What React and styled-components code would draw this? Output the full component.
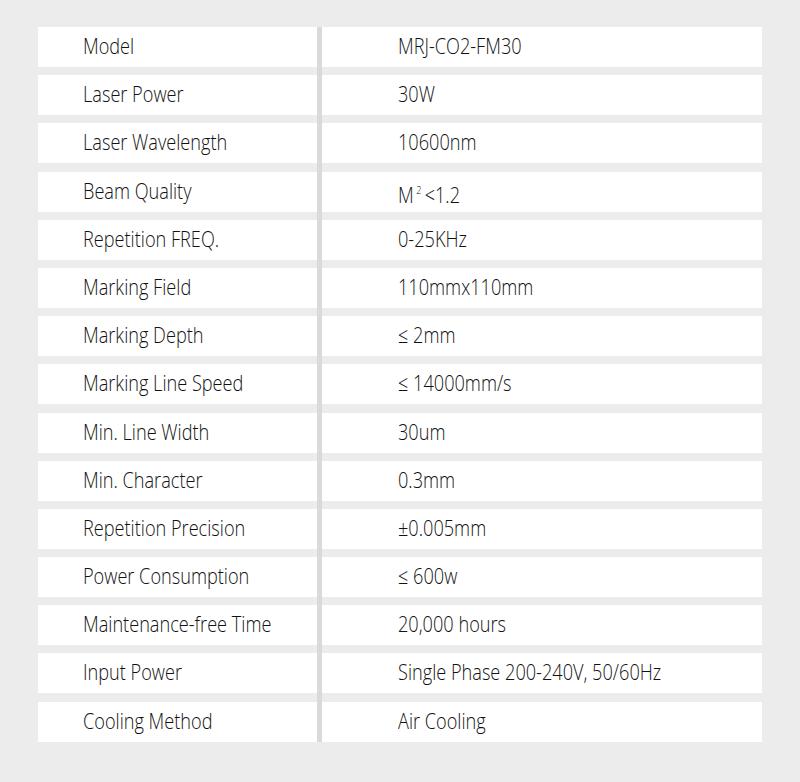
import React from "react";
import styled, { createGlobalStyle } from "styled-components";

const GlobalStyle = createGlobalStyle`
  html, body {
    margin: 0;
    padding: 0;
    background: #ececec;
  }
`;

const specs = [
  ["Model", "MRJ-CO2-FM30"],
  ["Laser Power", "30W"],
  ["Laser Wavelength", "10600nm"],
  ["Beam Quality", "beam"],
  ["Repetition FREQ.", "0-25KHz"],
  ["Marking Field", "110mmx110mm"],
  ["Marking Depth", "≤ 2mm"],
  ["Marking Line Speed", "≤ 14000mm/s"],
  ["Min. Line Width", "30um"],
  ["Min. Character", "0.3mm"],
  ["Repetition Precision", "±0.005mm"],
  ["Power Consumption", "≤ 600w"],
  ["Maintenance-free Time", "20,000 hours"],
  ["Input Power", "Single Phase 200-240V, 50/60Hz"],
  ["Cooling Method", "Air Cooling"],
];

const App = () => {
  return (
    <Page>
      <GlobalStyle />
      <Table>
        <Divider />
        {specs.map(([label, value]) => (
          <React.Fragment key={label}>
            <Cell $indent='45px'>
              <Text>{label}</Text>
            </Cell>
            <Cell $indent='76px'>
              <Text>
                {value === "beam" ? (
                  <>
                    M<Sup>2</Sup>&lt;1.2
                  </>
                ) : (
                  value
                )}
              </Text>
            </Cell>
          </React.Fragment>
        ))}
      </Table>
    </Page>
  );
};

export default App;

const Page = styled.div`
  min-height: 782px;
  box-sizing: border-box;
  padding: 27px 0 0 38px;
  background: #ececec;
`;

const Table = styled.div`
  display: grid;
  grid-template-columns: 279px 5px 440px;
  grid-auto-rows: 40px;
  row-gap: 8.2px;
  width: 724px;
`;

const Divider = styled.div`
  grid-column: 2;
  grid-row: 1 / 16;
  background: #dadada;
`;

const Cell = styled.div`
  background: #ffffff;
  padding-left: ${(p) => p.$indent};
  line-height: 36px;
  overflow: hidden;
  white-space: nowrap;
`;

const Text = styled.span`
  display: inline-block;
  font-family: "Open Sans", "Noto Sans", sans-serif;
  font-size: 22px;
  font-weight: 360;
  color: #111111;
  transform: scaleX(0.825);
  transform-origin: left center;
`;

const Sup = styled.span`
  font-size: 11px;
  vertical-align: 9px;
  margin: 0 4px 0 3px;
`;
